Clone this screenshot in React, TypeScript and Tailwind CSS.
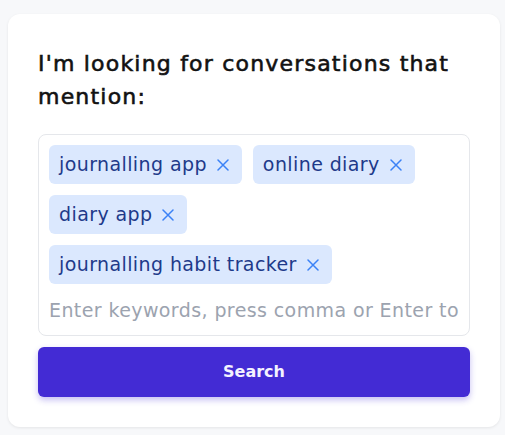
const tags = ['journalling app', 'online diary', 'diary app', 'journalling habit tracker'];

function CloseIcon() {
  return (
    <svg width="12" height="12" viewBox="0 0 12 12" fill="none" stroke="#3b82f6" strokeWidth="1.5" strokeLinecap="round">
      <path d="M1 1L11 11M11 1L1 11" />
    </svg>
  );
}

export default function App() {
  return (
    <div
      className="min-h-screen bg-[#f7f8fa] pt-[14px] pb-[9px]"
      style={{ fontFamily: '"DejaVu Sans", "Noto Sans", sans-serif' }}
    >
      <div className="ml-2 w-[492px] bg-white rounded-xl shadow-[0_1px_3px_rgba(0,0,0,0.08)] px-[30px] pt-[33px] pb-[30px]">
        <h2 className="text-[22px] leading-[33px] text-[#121212] tracking-[1.2px] [-webkit-text-stroke:0.6px_#121212]">
          I'm looking for conversations that mention:
        </h2>

        <div className="mt-[21px] border border-[#e5e7eb] rounded-lg p-[10px] flex flex-wrap gap-[11px]">
          {tags.map((tag) => (
            <span
              key={tag}
              className="h-[39px] flex items-center gap-[10px] pl-[10px] pr-[13px] rounded-md bg-[#dbe8fe] text-[#1e3a8a] text-[19px] tracking-[0.4px]"
            >
              {tag}
              <CloseIcon />
            </span>
          ))}
          <input
            className="w-full h-[30px] text-[19px] tracking-[0.4px] outline-none placeholder:text-[#9ca3af] text-[#1e3a8a]"
            placeholder="Enter keywords, press comma or Enter to add"
          />
        </div>

        <button className="mt-[11px] w-full h-[50px] rounded-md bg-[#432bd4] text-[#f4f2ff] font-bold text-[16px] shadow-[0_3px_6px_rgba(67,43,212,0.3)]">
          Search
        </button>
      </div>
    </div>
  );
}
